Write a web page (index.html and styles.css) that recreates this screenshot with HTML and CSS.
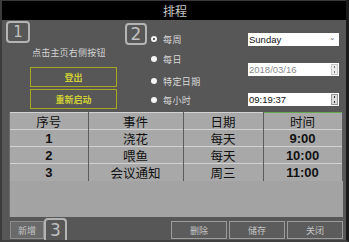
FILE: index.html
```html
<!DOCTYPE html>
<html lang="zh">
<head>
    <meta charset="UTF-8">
    <title>排程</title>
    <link rel="stylesheet" href="styles.css">
</head>
<body>
    <div class="frame">
        <div class="titlebar">排程</div>

        <div class="top">
            <div class="left-col">
                <div class="badge">1</div>
                <p class="hint">点击主页右侧按钮</p>
                <button class="yellow-btn first">登出</button>
                <button class="yellow-btn">重新启动</button>
            </div>

            <div class="right-col">
                <div class="badge badge-two">2</div>
                <div class="radios">
                    <div class="radio-row"><span class="dot ring"></span>每周</div>
                    <div class="radio-row"><span class="dot"></span>每日</div>
                    <div class="radio-row"><span class="dot"></span>特定日期</div>
                    <div class="radio-row"><span class="dot"></span>每小时</div>
                </div>
                <div class="inputs">
                    <div class="field">Sunday<span class="chev">&#8964;</span></div>
                    <div class="field disabled">2018/03/16<span class="spin"><i></i><i></i></span></div>
                    <div class="field">09:19:37<span class="spin dark"><i></i><i></i></span></div>
                </div>
            </div>
        </div>

        <div class="grid-area">
            <table class="sched">
                <tr>
                    <th class="c1">序号</th>
                    <th class="c2">事件</th>
                    <th class="c3">日期</th>
                    <th class="c4 active">时间</th>
                </tr>
                <tr><td class="num">1</td><td>浇花</td><td>每天</td><td class="num">9:00</td></tr>
                <tr><td class="num">2</td><td>喂鱼</td><td>每天</td><td class="num">10:00</td></tr>
                <tr><td class="num">3</td><td>会议通知</td><td>周三</td><td class="num">11:00</td></tr>
            </table>
        </div>

        <div class="footer">
            <button class="grey-btn add">新增</button>
            <div class="badge badge-three">3</div>
            <div class="spacer"></div>
            <button class="grey-btn">删除</button>
            <button class="grey-btn">储存</button>
            <button class="grey-btn">关闭</button>
        </div>
    </div>
</body>
</html>
```

FILE: styles.css
```css
body {
    margin: 0;
    background: #575757;
    font-family: "Noto Sans CJK SC", "DejaVu Sans", sans-serif;
}
.frame {
    width: 349px;
    height: 242px;
    box-sizing: border-box;
    background: #575757;
    border-left: 2px solid #3c3c3c;
    border-right: 3px solid #1a1a1a;
    border-bottom: 2px solid #404040;
    display: flex;
    flex-direction: column;
    overflow: hidden;
}
.titlebar {
    height: 20px;
    background: #000;
    border-top: 1px solid #3a3a3a;
    box-sizing: border-box;
    color: #c8c8c8;
    font-size: 12px;
    line-height: 19px;
    text-align: center;
    padding-left: 2px;
}
.top {
    height: 92px;
    display: flex;
}
.left-col {
    width: 118px;
    padding: 1px 0 0 4px;
    box-sizing: border-box;
}
.badge {
    width: 24px;
    height: 22px;
    box-sizing: border-box;
    border: 2px solid #b4b4b4;
    border-radius: 4px;
    color: #c0c0c0;
    font-family: "DejaVu Sans", sans-serif;
    font-size: 15px;
    line-height: 18px;
    text-align: center;
}
.hint {
    margin: 3px 0 0 26px;
    font-size: 9px;
    line-height: 13px;
    color: #d4d4d4;
    letter-spacing: 0.2px;
}
.yellow-btn {
    display: block;
    width: 87px;
    height: 20px;
    margin: 2px 0 0 24px;
    padding: 0;
    background: transparent;
    border: 1px solid #a8a820;
    color: #d0d034;
    font-family: "Noto Sans CJK SC", sans-serif;
    font-size: 9px;
    font-weight: bold;
}
.yellow-btn.first {
    margin-top: 8px;
}
.right-col {
    flex: 1;
    display: flex;
}
.badge-two {
    width: 22px;
    margin: 3px 0 0 5px;
    font-size: 17px;
}
.radios {
    width: 101px;
    padding-top: 9px;
}
.radio-row {
    height: 20px;
    display: flex;
    align-items: center;
    font-size: 9px;
    color: #d8d8d8;
    letter-spacing: 0.4px;
}
.radio-row:nth-child(3) {
    margin-top: 2px;
}
.radio-row:nth-child(4) {
    margin-top: -1px;
}
.dot {
    width: 6px;
    height: 6px;
    border-radius: 50%;
    background: #f4f4f4;
    margin: 0 6px 0 4px;
}
.dot.ring {
    box-sizing: border-box;
    border: 2px solid #f4f4f4;
    background: #303030;
}
.inputs {
    width: 91px;
    padding-top: 13px;
}
.field {
    height: 13px;
    background: #fff;
    box-sizing: border-box;
    font-family: "Liberation Sans", Arial, sans-serif;
    font-size: 9.5px;
    line-height: 13px;
    color: #111;
    padding-left: 1px;
    display: flex;
    justify-content: space-between;
    margin-bottom: 17px;
}
.field.disabled {
    color: #8a8a8a;
}
.chev {
    font-size: 8px;
    line-height: 9px;
    color: #777;
    margin-right: 3px;
}
.spin {
    width: 7px;
    margin: 1px;
    background: #ececec;
    border: 1px solid #c8c8c8;
    box-sizing: border-box;
    display: flex;
    flex-direction: column;
    align-items: center;
    justify-content: space-around;
}
.spin i {
    width: 1px;
    height: 2px;
    background: #777;
}
.spin.dark {
    background: #dcdcdc;
    border-color: #999;
}
.spin.dark i {
    background: #333;
}
.grid-area {
    height: 105px;
    margin: 0 3px 0 7px;
    background: #a3a3a3;
    border-left: 1px solid #6a6a6a;
}
.sched {
    border-collapse: collapse;
    width: 332px;
    table-layout: fixed;
    font-size: 12.5px;
    color: #111;
}
.sched th,
.sched td {
    height: 17px;
    padding: 0;
    line-height: 15px;
    text-align: center;
    font-weight: normal;
    background: #a8a8a8;
    border-top: 1px solid #d2d2d2;
    border-right: 1px solid #5c5c5c;
    box-sizing: border-box;
    overflow: hidden;
}
.sched th.active {
    border-top-color: #6aa84f;
}
.sched .num {
    font-family: "Liberation Sans", Arial, sans-serif;
    font-size: 13px;
    font-weight: bold;
}
.c1 { width: 78px; }
.c2 { width: 95px; }
.c3 { width: 80px; }
.c4 { width: 79px; }
.footer {
    flex: 1;
    display: flex;
    align-items: flex-end;
    padding: 0 3px 0 8px;
}
.grey-btn {
    height: 18px;
    width: 56px;
    margin: 0 0 1px 2px;
    padding: 0;
    background: #5c5c5c;
    border: 1px solid #9c9c9c;
    color: #c4c4c4;
    font-family: "Noto Sans CJK SC", sans-serif;
    font-size: 9px;
}
.grey-btn.add {
    width: 34px;
    margin-left: 0;
    background: #6a6a6a;
    border-color: #8c8c8c;
}
.badge-three {
    width: 23px;
    height: 22px;
    border-bottom: none;
    border-radius: 4px 4px 0 0;
    font-size: 17px;
    line-height: 21px;
}
.spacer {
    flex: 1;
}
```
